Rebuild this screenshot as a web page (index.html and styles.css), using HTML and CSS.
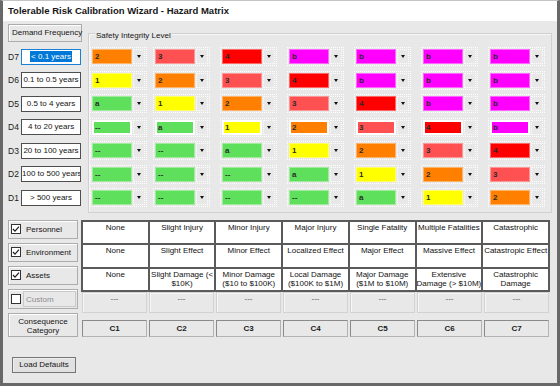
FILE: index.html
```html
<!DOCTYPE html>
<html>
<head>
<meta charset="utf-8">
<title>Hazard Matrix</title>
<link rel="stylesheet" href="styles.css">
</head>
<body>
<div class="window">
  <div class="titlebar">Tolerable Risk Calibration Wizard - Hazard Matrix</div>
  <div class="content">
    <div class="matrix">
      <div class="freq-col">
        <div class="panel freq-head">Demand Frequency</div>
        <div class="freq-row"><span class="dlabel">D7</span><span class="tbox focused"><span class="sel">&lt; 0.1 years</span></span></div>
        <div class="freq-row"><span class="dlabel">D6</span><span class="tbox">0.1 to 0.5 years</span></div>
        <div class="freq-row"><span class="dlabel">D5</span><span class="tbox">0.5 to 4 years</span></div>
        <div class="freq-row"><span class="dlabel">D4</span><span class="tbox">4 to 20 years</span></div>
        <div class="freq-row"><span class="dlabel">D3</span><span class="tbox">20 to 100 years</span></div>
        <div class="freq-row"><span class="dlabel">D2</span><span class="tbox">100 to 500 years</span></div>
        <div class="freq-row"><span class="dlabel">D1</span><span class="tbox">&gt; 500 years</span></div>
      </div>
      <div class="group">
        <div class="legend">Safety Integrity Level</div>
        <div class="sil-grid">
          <div class="dd"><span class="val o">2</span><span class="arrow"></span></div>
          <div class="dd"><span class="val s">3</span><span class="arrow"></span></div>
          <div class="dd"><span class="val r">4</span><span class="arrow"></span></div>
          <div class="dd"><span class="val m">b</span><span class="arrow"></span></div>
          <div class="dd"><span class="val m">b</span><span class="arrow"></span></div>
          <div class="dd"><span class="val m">b</span><span class="arrow"></span></div>
          <div class="dd"><span class="val m">b</span><span class="arrow"></span></div>

          <div class="dd"><span class="val y">1</span><span class="arrow"></span></div>
          <div class="dd"><span class="val o">2</span><span class="arrow"></span></div>
          <div class="dd"><span class="val s">3</span><span class="arrow"></span></div>
          <div class="dd"><span class="val r">4</span><span class="arrow"></span></div>
          <div class="dd"><span class="val m">b</span><span class="arrow"></span></div>
          <div class="dd"><span class="val m">b</span><span class="arrow"></span></div>
          <div class="dd"><span class="val m">b</span><span class="arrow"></span></div>

          <div class="dd"><span class="val g">a</span><span class="arrow"></span></div>
          <div class="dd"><span class="val y">1</span><span class="arrow"></span></div>
          <div class="dd"><span class="val o">2</span><span class="arrow"></span></div>
          <div class="dd"><span class="val s">3</span><span class="arrow"></span></div>
          <div class="dd"><span class="val r">4</span><span class="arrow"></span></div>
          <div class="dd"><span class="val m">b</span><span class="arrow"></span></div>
          <div class="dd"><span class="val m">b</span><span class="arrow"></span></div>

          <div class="dd"><span class="val g inset">--</span><span class="arrow"></span></div>
          <div class="dd"><span class="val g inset">a</span><span class="arrow"></span></div>
          <div class="dd"><span class="val y inset">1</span><span class="arrow"></span></div>
          <div class="dd"><span class="val o inset">2</span><span class="arrow"></span></div>
          <div class="dd"><span class="val s inset">3</span><span class="arrow"></span></div>
          <div class="dd"><span class="val r inset">4</span><span class="arrow"></span></div>
          <div class="dd"><span class="val m inset">b</span><span class="arrow"></span></div>

          <div class="dd"><span class="val g">--</span><span class="arrow"></span></div>
          <div class="dd"><span class="val g">--</span><span class="arrow"></span></div>
          <div class="dd"><span class="val g">a</span><span class="arrow"></span></div>
          <div class="dd"><span class="val y">1</span><span class="arrow"></span></div>
          <div class="dd"><span class="val o">2</span><span class="arrow"></span></div>
          <div class="dd"><span class="val s">3</span><span class="arrow"></span></div>
          <div class="dd"><span class="val r">4</span><span class="arrow"></span></div>

          <div class="dd"><span class="val g">--</span><span class="arrow"></span></div>
          <div class="dd"><span class="val g">--</span><span class="arrow"></span></div>
          <div class="dd"><span class="val g">--</span><span class="arrow"></span></div>
          <div class="dd"><span class="val g">a</span><span class="arrow"></span></div>
          <div class="dd"><span class="val y">1</span><span class="arrow"></span></div>
          <div class="dd"><span class="val o">2</span><span class="arrow"></span></div>
          <div class="dd"><span class="val s">3</span><span class="arrow"></span></div>

          <div class="dd"><span class="val g">--</span><span class="arrow"></span></div>
          <div class="dd"><span class="val g">--</span><span class="arrow"></span></div>
          <div class="dd"><span class="val g">--</span><span class="arrow"></span></div>
          <div class="dd"><span class="val g">--</span><span class="arrow"></span></div>
          <div class="dd"><span class="val g">a</span><span class="arrow"></span></div>
          <div class="dd"><span class="val y">1</span><span class="arrow"></span></div>
          <div class="dd"><span class="val o">2</span><span class="arrow"></span></div>
        </div>
      </div>
    </div>

    <div class="cons">
      <div class="cat-col">
        <div class="panel cat"><span class="cb"><svg viewBox="0 0 8 8" width="8" height="8"><polyline points="1,4 3,6.2 7,1.6" fill="none" stroke="#1a1a1a" stroke-width="1.2"/></svg></span><span>Personnel</span></div>
        <div class="panel cat"><span class="cb"><svg viewBox="0 0 8 8" width="8" height="8"><polyline points="1,4 3,6.2 7,1.6" fill="none" stroke="#1a1a1a" stroke-width="1.2"/></svg></span><span>Environment</span></div>
        <div class="panel cat"><span class="cb"><svg viewBox="0 0 8 8" width="8" height="8"><polyline points="1,4 3,6.2 7,1.6" fill="none" stroke="#1a1a1a" stroke-width="1.2"/></svg></span><span>Assets</span></div>
        <div class="panel cat custom"><span class="cb"></span><span class="custom-label">Custom</span></div>
        <div class="panel cat-title">Consequence<br>Category</div>
      </div>
      <div class="cons-table">
        <div class="impact">
          <div>None</div>
          <div>Slight Injury</div>
          <div>Minor Injury</div>
          <div>Major Injury</div>
          <div>Single Fatality</div>
          <div>Multiple Fatalities</div>
          <div>Catastrophic</div>

          <div>None</div>
          <div>Slight Effect</div>
          <div>Minor Effect</div>
          <div>Localized Effect</div>
          <div>Major Effect</div>
          <div>Massive Effect</div>
          <div>Catastropic Effect</div>

          <div>None</div>
          <div>Slight Damage (&lt;<br>$10K)</div>
          <div>Minor Damage<br>($10 to $100K)</div>
          <div>Local Damage<br>($100K to $1M)</div>
          <div>Major Damage<br>($1M to $10M)</div>
          <div>Extensive<br>Damage (&gt; $10M)</div>
          <div>Catastrophic<br>Damage</div>
        </div>
        <div class="na-row">
          <div>---</div><div>---</div><div>---</div><div>---</div><div>---</div><div>---</div><div>---</div>
        </div>
        <div class="code-row">
          <div>C1</div><div>C2</div><div>C3</div><div>C4</div><div>C5</div><div>C6</div><div>C7</div>
        </div>
      </div>
    </div>

    <div class="footer"><button class="btn" type="button">Load Defaults</button></div>
  </div>
</div>
</body>
</html>
```

FILE: styles.css
```css
* { box-sizing: border-box; }
html, body { margin: 0; padding: 0; background: #ffffff; }
body {
  font-family: "Liberation Sans", Arial, sans-serif;
  font-size: 8px;
  color: #141414;
}
.window {
  width: 560px;
  height: 386px;
  border: 3px solid #686868;
  border-top: 1px solid #c4c4c4;
  background: #e8e8e8;
  display: flex;
  flex-direction: column;
  overflow: hidden;
}
.titlebar {
  flex: none;
  height: 20px;
  line-height: 20px;
  background: #ffffff;
  padding-left: 5px;
  font-size: 9.5px;
  font-weight: bold;
  color: #161616;
  white-space: nowrap;
}
.content {
  flex: 1;
  display: flex;
  flex-direction: column;
  padding: 3px 0 0 5px;
}

/* ---------- matrix ---------- */
.matrix { display: flex; align-items: flex-start; }
.freq-col { width: 80px; flex: none; display: flex; flex-direction: column; }
.panel {
  background: #e8e8e8;
  border: 1px solid #acacac;
  box-shadow: inset 1px 1px 0 #ffffff;
}
.freq-head {
  width: 74px;
  height: 18px;
  line-height: 16px;
  padding-left: 3px;
  margin-bottom: 3px;
  white-space: nowrap;
}
.freq-row { height: 23.5px; display: flex; align-items: center; }
.dlabel { width: 13px; flex: none; font-size: 8.5px; color: #1a1a1a; }
.tbox {
  width: 60px;
  height: 16px;
  flex: none;
  background: #ffffff;
  border: 1px solid #4e4e4e;
  text-align: center;
  line-height: 14px;
  white-space: nowrap;
  overflow: hidden;
}
.tbox.focused { border-color: #1b7fd4; }
.sel { background: #0078d7; color: #ffffff; padding: 1px 1px; }

.group {
  width: 464px;
  margin-top: 9px;
  padding: 0 0 2px 3px;
  border: 1px solid #d0d0d0;
  box-shadow: inset 1px 1px 0 #f7f7f7;
}
.legend {
  display: table;
  margin: -3px 0 4px 3px;
  padding: 0 1px;
  line-height: 10px;
  background: #e8e8e8;
  color: #161616;
}
.sil-grid {
  display: grid;
  grid-template-columns: 63px 67px 67px 67px 67px 67px 54px;
  grid-auto-rows: 23.5px;
  align-items: center;
}
.dd {
  display: flex;
  width: 53px;
  height: 15px;
  outline: 1px dotted #ffffff;
  outline-offset: 1px;
}
.val {
  width: 40px;
  height: 15px;
  flex: none;
  border: 1px solid rgba(255, 255, 255, 0.4);
  padding-left: 2px;
  line-height: 13px;
  font-weight: bold;
  color: #2b2b2b;
}
.val.inset { border: 2px solid #ffffff; line-height: 11px; padding-left: 1px; }
.val.g { background: #5fe05c; }
.val.y { background: #ffff00; }
.val.o { background: #ff8000; }
.val.s { background: #ff5151; }
.val.r { background: #ff0000; }
.val.m { background: #ff00ff; }
.arrow {
  width: 12px;
  flex: none;
  margin-left: 1px;
  border: 1px dotted #fdfdfd;
  display: flex;
  align-items: center;
  justify-content: center;
}
.arrow::after {
  content: "";
  border-left: 2.5px solid transparent;
  border-right: 2.5px solid transparent;
  border-top: 3px solid #111111;
}

/* ---------- consequences ---------- */
.cons { display: flex; margin-top: 7px; }
.cat-col { width: 73px; flex: none; display: flex; flex-direction: column; }
.cat {
  width: 70px;
  height: 19px;
  margin-bottom: 4px;
  display: flex;
  align-items: center;
  gap: 5px;
  padding-left: 2px;
  white-space: nowrap;
}
.cb {
  width: 10px;
  height: 10px;
  flex: none;
  background: #ffffff;
  border: 1px solid #333333;
  display: flex;
  align-items: center;
  justify-content: center;
}
.custom { height: 20px; gap: 2px; }
.custom-label {
  flex: 1;
  align-self: stretch;
  margin: 1px 1px 1px 0;
  border: 1px solid #c9c9c9;
  padding-left: 2px;
  line-height: 15px;
  color: #8c8c8c;
}
.cat-title {
  width: 70px;
  height: 24px;
  padding-top: 3px;
  text-align: center;
  line-height: 9px;
}
.cons-table { width: 469px; flex: none; display: flex; flex-direction: column; }
.impact {
  display: grid;
  grid-template-columns: repeat(7, 1fr);
  grid-template-rows: 21px 22px 21px;
  gap: 2px;
  background: #5a5a5a;
  border: 2px solid #5a5a5a;
}
.impact div {
  background: #ffffff;
  text-align: center;
  line-height: 9px;
  padding-top: 1px;
  white-space: nowrap;
  overflow: hidden;
  color: #111111;
}
.na-row, .code-row {
  display: grid;
  grid-template-columns: repeat(7, 1fr);
  gap: 2px;
  padding: 0 1px;
}
.na-row { height: 21px; }
.na-row div {
  border: 1px solid #d2d2d2;
  box-shadow: inset 1px 1px 0 #f6f6f6;
  text-align: center;
  line-height: 12px;
  color: #555555;
}
.code-row { height: 17px; margin-top: 7px; }
.code-row div {
  border: 1px solid #b3b3b3;
  border-top-color: #8a8a8a;
  border-left-color: #8a8a8a;
  text-align: center;
  line-height: 15px;
  font-weight: bold;
  color: #1a1a1a;
}

/* ---------- footer ---------- */
.footer { margin-top: 20px; padding-left: 4px; }
.btn {
  width: 64px;
  height: 16px;
  padding: 0;
  font-family: "Liberation Sans", Arial, sans-serif;
  font-size: 8px;
  color: #141414;
  background: #e1e1e1;
  border: 1px solid #767676;
  box-shadow: inset 1px 1px 0 #efefef;
}
```
